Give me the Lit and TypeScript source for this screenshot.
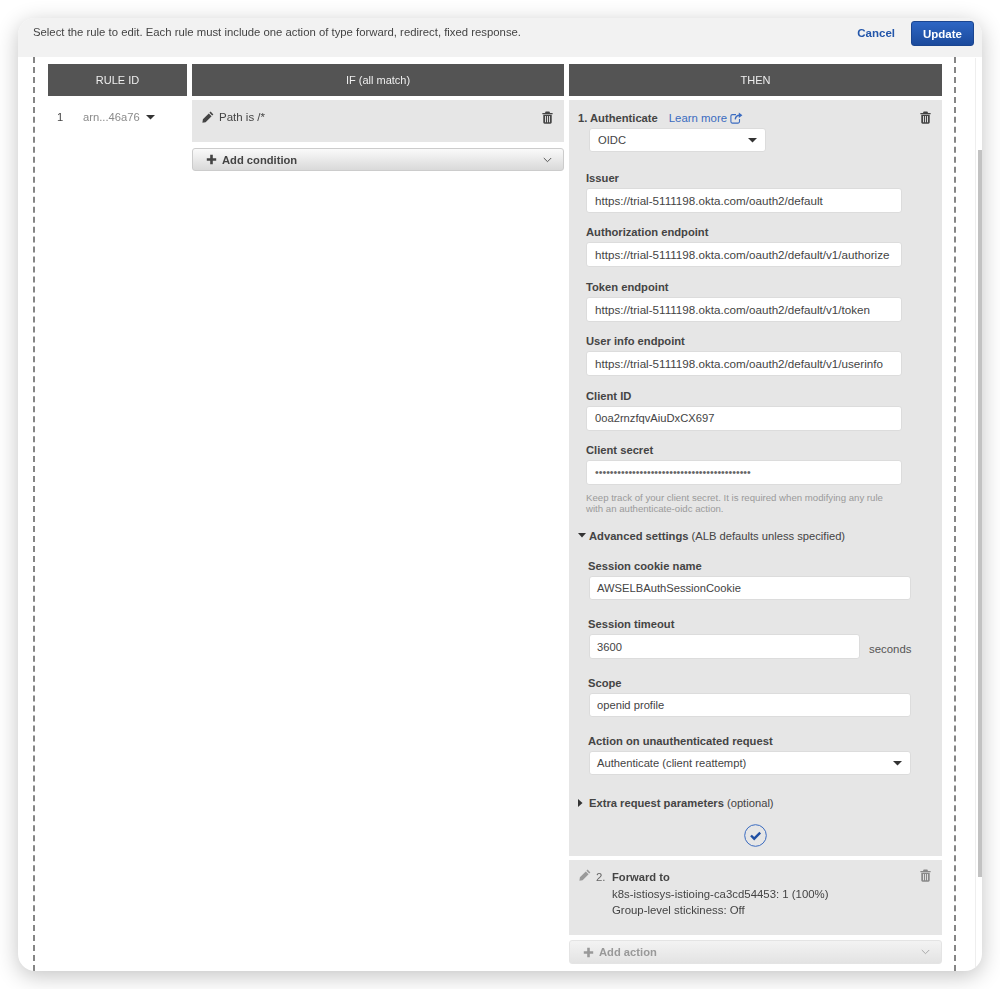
import { LitElement, html, css, svg } from "lit";
import { customElement } from "lit/decorators.js";

const trash = (c = "#444") => html`<svg class="ico" width="11" height="13" viewBox="0 0 12 14" fill="${c}">
  <path d="M4 0.5h4l.8 1.5H11.6v1.4H.4V2h2.8z"/>
  <path fill-rule="evenodd" d="M1.4 4h9.2v8.2c0 .9-.6 1.5-1.4 1.5H2.8c-.8 0-1.4-.6-1.4-1.5zM3.3 5.4v6.8h1V5.4zM5.5 5.4v6.8h1V5.4zM7.7 5.4v6.8h1V5.4z"/>
</svg>`;
const pencil = (c = "#444") => html`<svg class="ico" width="12" height="12" viewBox="0 0 12 12" fill="${c}">
  <path d="M8.6.6 11.4 3.4 10.2 4.6 7.4 1.8zM6.8 2.4 9.6 5.2 3.6 11.2 0.4 11.8 0.9 8.3z"/>
</svg>`;
const plus = (c = "#444") => html`<svg class="ico" width="11" height="11" viewBox="0 0 11 11" fill="${c}">
  <path d="M4.2.8h2.6v3.4h3.4v2.6H6.8v3.4H4.2V6.8H.8V4.2h3.4z"/>
</svg>`;
const chevron = (c = "#555") => html`<svg class="ico" width="9" height="6" viewBox="0 0 9 6" fill="none" stroke="${c}" stroke-width="1">
  <path d="M.8 1 4.5 4.7 8.2 1"/>
</svg>`;
const ext = html`<svg class="ico" width="13" height="12" viewBox="0 0 13 12" fill="none" stroke="#3a6bc0" stroke-width="1.1">
  <path d="M9.5 7v2.6c0 .9-.6 1.5-1.4 1.5H2.4C1.5 11.1.9 10.5.9 9.6V4.1c0-.9.6-1.5 1.5-1.5H6"/>
  <path d="M5.2 7.3C5.6 4.8 7.4 3.3 9.8 3.3" stroke-width="1.4"/>
  <path d="M8.8.6 12.4 3.3 8.8 6z" fill="#3a6bc0" stroke="none"/>
</svg>`;
const caret = svg`<path d="M0 0h9L4.5 4.5z"/>`;
const caretDown = html`<svg class="ico" width="9" height="5" viewBox="0 0 9 5" fill="#333">${caret}</svg>`;

@customElement("app-root")
export class AppRoot extends LitElement {
  static styles = css`
    :host { display: block; height: 989px; padding: 18px; box-sizing: border-box; background: #fff; overflow: hidden;
      font-family: "Liberation Sans", Arial, sans-serif; font-size: 11.2px; color: #444; }
    * { box-sizing: border-box; }
    .ico { display: block; flex: none; }
    .window { position: relative; height: 953px; background: #fff; border-radius: 17px; overflow: hidden;
      box-shadow: 0 5px 22px rgba(0,0,0,.24); }
    .soft { height: 100%; filter: blur(.45px); }
    .top { height: 39px; background: #f2f2f2; display: flex; align-items: flex-start; padding: 3px 8px 0 15px; }
    .intro { flex: 1; margin-top: 5px; font-size: 11.33px; color: #444; }
    .cancel { font-weight: 700; color: #2356aa; margin: 6px 16px 0 0; font-size: 11.5px; }
    .update { width: 63px; height: 25px; border-radius: 3px; background: linear-gradient(#2d66c4, #1b4a9c);
      border: 1px solid #1a4590; color: #fff; font-weight: 700; font-size: 11.5px; display: flex; align-items: center; justify-content: center; }
    .body { height: 914px; margin: 0 25px 0 15px; border-left: 2px dashed #858585; border-right: 2px dashed #858585; padding: 7px 11px 0 13px; width: 923px; }
    .grid { display: grid; grid-template-columns: 139px 372px 373px; column-gap: 5px; }
    .th { height: 32px; background: #545454; color: #eee; display: flex; align-items: center; justify-content: center; font-size: 11px; }
    .rule { padding: 15px 0 0 9px; display: flex; align-items: center; align-self: start; }
    .rule .num { width: 26px; color: #444; }
    .rule .arn { width: 63px; color: #8a8a8a; }
    .cell { padding-top: 4px; display: flex; flex-direction: column; }
    .cond { height: 42px; background: #e6e6e6; display: flex; align-items: flex-start; padding: 11px 11px 0 10px; }
    .cond .txt { flex: 1; margin-left: 5px; font-size: 11.5px; }
    .add { height: 23px; margin-top: 6px; border-radius: 3px; border: 1px solid #ccc; background: linear-gradient(#fafafa, #d9d9d9);
      display: flex; align-items: center; padding: 0 11px 0 13px; font-weight: 700; color: #444; }
    .add .t { flex: 1; margin-left: 5px; }
    .add.off { height: 24px; margin-top: 5px; border-color: #e4e4e4; background: linear-gradient(#f3f3f3, #e3e3e3); color: #999; padding-right: 11px; }
    .p1 { height: 756px; background: #e6e6e6; padding: 11px 11px 0 9px; display: flex; flex-direction: column; }
    .head { display: flex; align-items: center; height: 13px; }
    .head b { color: #444; }
    .link { color: #3a6bc0; margin-left: 11px; margin-right: 3px; font-size: 11.4px; }
    .sp { flex: 1; }
    .box { background: #fff; border: 1px solid #dcdcdc; border-radius: 3px; height: 25px; display: flex; align-items: center; padding: 0 8px; color: #444; }
    .url { font-size: 11.65px; }
    .dots { font-size: 10.6px; color: #666; }
    .sel { width: 177px; height: 24px; margin: 4px 0 0 11px; justify-content: space-between; padding-right: 8px; }
    .fields { padding-left: 8px; width: 325px; margin-top: 19px; }
    .fld { height: 54.4px; }
    .lbl { font-weight: 700; height: 14px; line-height: 14px; margin-bottom: 3px; color: #444; }
    .box.w { width: 316px; }
    .help { margin: 7px 0 0 8px; font-size: 9.65px; line-height: 11.5px; color: #9a9a9a; width: 312px; }
    .adv { display: flex; align-items: center; margin-top: 15px; }
    .tri { width: 11px; flex: none; }
    .adv b { color: #444; margin-right: 3px; }
    .advf { padding-left: 10px; margin-top: 17px; }
    .fa { height: 58.3px; }
    .fa .box { height: 24.5px; margin-left: 1px; padding-left: 7px; }
    .box.x { width: 322px; }
    .row { display: flex; align-items: flex-end; }
    .row .box { width: 271px; }
    .row span { margin-left: 9px; color: #555; margin-bottom: 4px; font-size: 11.4px; }
    .extra { margin-top: 5px; }
    .okwrap { display: flex; justify-content: center; margin-top: 15px; padding-left: 2px; }
    .p2 { height: 75px; margin-top: 4px; background: #e6e6e6; display: flex; padding: 9px 11px 0 10px; line-height: 16.5px; font-size: 11.4px; }
    .p2 .n { margin-left: 5px; width: 16px; color: #666; }
    .p2 .c { flex: 1; }
    .p2 .c b { display: block; color: #444; font-size: 11.2px; }
    .scroll { position: absolute; right: 0; top: 132px; width: 4px; height: 727px; background: #c2c2c2; }
    .track { position: absolute; right: 4px; top: 40px; bottom: 0; width: 3px; border-left: 1px solid #eee; }
  `;

  field(label: string, value: string) {
    return html`<div class="fld"><div class="lbl">${label}</div><div class="box w url">${value}</div></div>`;
  }

  render() {
    return html`<div class="window"><div class="soft">
      <div class="top">
        <div class="intro">Select the rule to edit. Each rule must include one action of type forward, redirect, fixed response.</div>
        <div class="cancel">Cancel</div>
        <div class="update">Update</div>
      </div>
      <div class="body">
        <div class="grid">
          <div class="th">RULE ID</div>
          <div class="th">IF (all match)</div>
          <div class="th">THEN</div>
          <div class="rule"><span class="num">1</span><span class="arn">arn...46a76</span>${caretDown}</div>
          <div class="cell">
            <div class="cond">${pencil()}<span class="txt">Path is /*</span>${trash()}</div>
            <div class="add">${plus()}<span class="t">Add condition</span>${chevron()}</div>
          </div>
          <div class="cell">
            <div class="p1">
              <div class="head"><b>1. Authenticate</b><span class="link">Learn more</span>${ext}<span class="sp"></span>${trash()}</div>
              <div class="box sel"><span>OIDC</span>${caretDown}</div>
              <div class="fields">
                ${this.field("Issuer", "https://trial-5111198.okta.com/oauth2/default")}
                ${this.field("Authorization endpoint", "https://trial-5111198.okta.com/oauth2/default/v1/authorize")}
                ${this.field("Token endpoint", "https://trial-5111198.okta.com/oauth2/default/v1/token")}
                ${this.field("User info endpoint", "https://trial-5111198.okta.com/oauth2/default/v1/userinfo")}
                <div class="fld"><div class="lbl">Client ID</div><div class="box w">0oa2rnzfqvAiuDxCX697</div></div>
                <div><div class="lbl">Client secret</div><div class="box w dots">${"•".repeat(42)}</div></div>
              </div>
              <div class="help">Keep track of your client secret. It is required when modifying any rule with an authenticate-oidc action.</div>
              <div class="adv"><span class="tri"><svg class="ico" width="8" height="5" viewBox="0 0 8 5" fill="#333"><path d="M0 0h8L4 4.5z"/></svg></span><b>Advanced settings</b> (ALB defaults unless specified)</div>
              <div class="advf">
                <div class="fa"><div class="lbl">Session cookie name</div><div class="box x">AWSELBAuthSessionCookie</div></div>
                <div class="fa"><div class="lbl">Session timeout</div><div class="row"><div class="box">3600</div><span>seconds</span></div></div>
                <div class="fa"><div class="lbl">Scope</div><div class="box x">openid profile</div></div>
                <div class="fa"><div class="lbl">Action on unauthenticated request</div><div class="box x">Authenticate (client reattempt)<i class="sp"></i>${caretDown}</div></div>
              </div>
              <div class="adv extra"><span class="tri"><svg class="ico" width="5" height="8" viewBox="0 0 5 8" fill="#333"><path d="M0 0v8L4.5 4z"/></svg></span><b>Extra request parameters</b> (optional)</div>
              <div class="okwrap"><svg class="ico" width="23" height="23" viewBox="0 0 23 23">
                <circle cx="11.5" cy="11.5" r="10.8" fill="none" stroke="#3a6bc0" stroke-width="1"/>
                <path d="M7 11.5l3.2 3.2 6-6" fill="none" stroke="#1f4fa3" stroke-width="2.4"/>
              </svg></div>
            </div>
            <div class="p2">
              ${pencil("#999")}<span class="n">2.</span>
              <div class="c"><b>Forward to</b>k8s-istiosys-istioing-ca3cd54453: 1 (100%)<br>Group-level stickiness: Off</div>
              ${trash("#888")}
            </div>
            <div class="add off">${plus("#999")}<span class="t">Add action</span>${chevron("#aaa")}</div>
          </div>
        </div>
      </div>
      <div class="track"></div>
      <div class="scroll"></div>
    </div></div>`;
  }
}
